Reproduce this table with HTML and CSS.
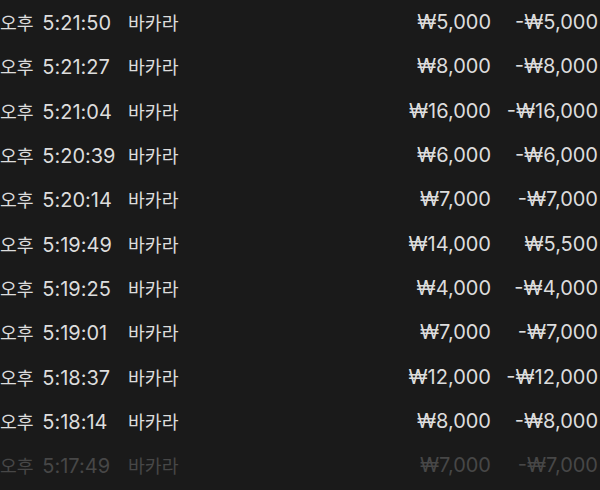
FILE: index.html
```html
<!DOCTYPE html>
<html lang="ko">
<head>
<meta charset="utf-8">
<link rel="stylesheet" href="styles.css">
</head>
<body>
<div class="list">
  <div class="row"><span class="time"><span class="ko">오후</span> 5:21:50</span><span class="game ko">바카라</span><span class="bet">₩5,000</span><span class="res">-₩5,000</span></div>
  <div class="row"><span class="time"><span class="ko">오후</span> 5:21:27</span><span class="game ko">바카라</span><span class="bet">₩8,000</span><span class="res">-₩8,000</span></div>
  <div class="row"><span class="time"><span class="ko">오후</span> 5:21:04</span><span class="game ko">바카라</span><span class="bet">₩16,000</span><span class="res">-₩16,000</span></div>
  <div class="row"><span class="time"><span class="ko">오후</span> 5:20:39</span><span class="game ko">바카라</span><span class="bet">₩6,000</span><span class="res">-₩6,000</span></div>
  <div class="row"><span class="time"><span class="ko">오후</span> 5:20:14</span><span class="game ko">바카라</span><span class="bet">₩7,000</span><span class="res">-₩7,000</span></div>
  <div class="row"><span class="time"><span class="ko">오후</span> 5:19:49</span><span class="game ko">바카라</span><span class="bet">₩14,000</span><span class="res">₩5,500</span></div>
  <div class="row"><span class="time"><span class="ko">오후</span> 5:19:25</span><span class="game ko">바카라</span><span class="bet">₩4,000</span><span class="res">-₩4,000</span></div>
  <div class="row"><span class="time"><span class="ko">오후</span> 5:19:01</span><span class="game ko">바카라</span><span class="bet">₩7,000</span><span class="res">-₩7,000</span></div>
  <div class="row"><span class="time"><span class="ko">오후</span> 5:18:37</span><span class="game ko">바카라</span><span class="bet">₩12,000</span><span class="res">-₩12,000</span></div>
  <div class="row"><span class="time"><span class="ko">오후</span> 5:18:14</span><span class="game ko">바카라</span><span class="bet">₩8,000</span><span class="res">-₩8,000</span></div>
  <div class="row faded"><span class="time"><span class="ko">오후</span> 5:17:49</span><span class="game ko">바카라</span><span class="bet">₩7,000</span><span class="res">-₩7,000</span></div>
</div>
</body>
</html>
```
FILE: styles.css
```css
html, body {
  margin: 0;
  padding: 0;
  background: #1a1a1a;
  width: 600px;
  height: 490px;
  overflow: hidden;
}
.list {
  display: flex;
  flex-direction: column;
  font-family: Inter, "Noto Sans CJK KR", sans-serif;
  font-size: 20px;
  color: #dddddd;
}
.row {
  display: flex;
  align-items: center;
  height: 44.33px;
  white-space: nowrap;
}
.ko {
  font-family: "Noto Sans CJK KR", sans-serif;
  font-size: 18.3px;
}
.time {
  width: 128px;
}
.time .ko {
  margin-right: 3px;
}
.game {
  flex: 1;
}
.bet {
  width: 120px;
  text-align: right;
}
.res {
  width: 107px;
  text-align: right;
  padding-right: 2px;
}
.faded {
  color: #474747;
}
```
